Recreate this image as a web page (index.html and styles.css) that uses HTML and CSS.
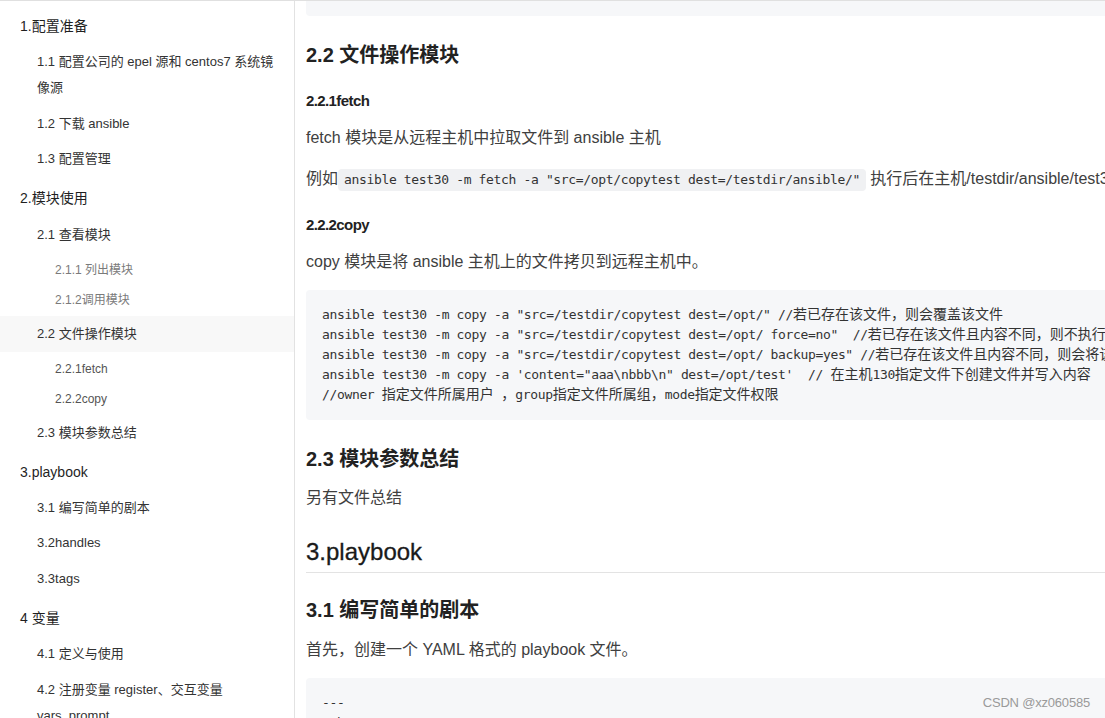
FILE: index.html
```html
<!DOCTYPE html>
<html lang="zh-CN">
<head>
<meta charset="utf-8">
<title>ansible 笔记</title>
<link rel="stylesheet" href="styles.css">
</head>
<body>
<div class="page">
  <nav class="toc">
    <ul class="toc-list">
      <li class="l1">1.配置准备</li>
      <li class="l2">1.1 配置公司的 epel 源和 centos7 系统镜像源</li>
      <li class="l2">1.2 下载 ansible</li>
      <li class="l2">1.3 配置管理</li>
      <li class="l1">2.模块使用</li>
      <li class="l2">2.1 查看模块</li>
      <li class="group">
        <ul>
          <li class="l3 muted">2.1.1 列出模块</li>
          <li class="l3 muted">2.1.2调用模块</li>
        </ul>
      </li>
      <li class="l2 active">2.2 文件操作模块</li>
      <li class="group">
        <ul>
          <li class="l3">2.2.1fetch</li>
          <li class="l3">2.2.2copy</li>
        </ul>
      </li>
      <li class="l2">2.3 模块参数总结</li>
      <li class="l1">3.playbook</li>
      <li class="l2">3.1 编写简单的剧本</li>
      <li class="l2">3.2handles</li>
      <li class="l2">3.3tags</li>
      <li class="l1">4 变量</li>
      <li class="l2">4.1 定义与使用</li>
      <li class="l2">4.2 注册变量 register、交互变量 vars_prompt</li>
    </ul>
  </nav>
  <main class="content">
    <div class="pre-tail"></div>
    <h3 class="h3">2.2 文件操作模块</h3>
    <h4 class="h4">2.2.1fetch</h4>
    <p class="para">fetch 模块是从远程主机中拉取文件到 ansible 主机</p>
    <p class="para nowrap">例如<code class="inline">ansible test30 -m fetch -a "src=/opt/copytest dest=/testdir/ansible/"</code> 执行后在主机/testdir/ansible/test30/opt/copytest 中生成文件</p>
    <h4 class="h4">2.2.2copy</h4>
    <p class="para">copy 模块是将 ansible 主机上的文件拷贝到远程主机中。</p>
    <pre class="code">ansible test30 -m copy -a "src=/testdir/copytest dest=/opt/" //<span class="zh">若已存在该文件，则会覆盖该文件</span>
ansible test30 -m copy -a "src=/testdir/copytest dest=/opt/ force=no"  //<span class="zh">若已存在该文件且内容不同，则不执行拷贝</span>
ansible test30 -m copy -a "src=/testdir/copytest dest=/opt/ backup=yes" //<span class="zh">若已存在该文件且内容不同，则会将该文件备份</span>
ansible test30 -m copy -a 'content="aaa\nbbb\n" dest=/opt/test'  // <span class="zh">在主机</span>130<span class="zh">指定文件下创建文件并写入内容</span>
//owner <span class="zh">指定文件所属用户</span> <span class="zh">，</span>group<span class="zh">指定文件所属组，</span>mode<span class="zh">指定文件权限</span></pre>
    <h3 class="h3">2.3 模块参数总结</h3>
    <p class="para">另有文件总结</p>
    <h2 class="h2">3.playbook</h2>
    <h3 class="h3 after-h2">3.1 编写简单的剧本</h3>
    <p class="para">首先，创建一个 YAML 格式的 playbook 文件。</p>
    <pre class="code">---
- hosts: test30
  remote_user: root</pre>
  </main>
</div>
<div class="watermark">CSDN @xz060585</div>
</body>
</html>
```

FILE: styles.css
```css
html, body {
  margin: 0;
  padding: 0;
  background: #ffffff;
}

body {
  width: 1105px;
  height: 718px;
  overflow: hidden;
  position: relative;
  font-family: "Liberation Sans", "Noto Sans CJK SC", sans-serif;
  border-top: 1px solid #e0e0e0;
  box-sizing: border-box;
}

.page {
  display: flex;
  align-items: flex-start;
}

/* ---------- sidebar ---------- */
.toc {
  flex: 0 0 295px;
  width: 295px;
  height: 717px;
  border-right: 1px solid #e2e2e2;
  box-sizing: border-box;
  overflow: hidden;
}

.toc ul {
  list-style: none;
  margin: 0;
  padding: 0;
}

.toc-list {
  padding-top: 4px !important;
}

.l1 {
  font-size: 14px;
  line-height: 28px;
  padding: 7px 20px 4.75px 20px;
  color: #1f1f1f;
}

.l2 {
  font-size: 13px;
  line-height: 26px;
  padding: 4.5px 14px 5px 37px;
  color: #333333;
}

.l2.active {
  background: #f8f8f8;
}

.group ul {
  padding: 2px 0 0.5px 0;
}

.l3 {
  font-size: 12px;
  line-height: 20px;
  padding: 5px 20px 5.5px 55px;
  color: #555555;
}

.l3.muted {
  color: #7a7a7a;
}

/* ---------- main content ---------- */
.content {
  flex: 0 0 1100px;
  width: 1100px;
  padding-left: 11px;
  box-sizing: border-box;
  color: #404040;
}

.pre-tail {
  height: 15px;
  background: #f6f7f9;
  border-radius: 0 0 4px 4px;
}

.h3 {
  font-size: 20px;
  line-height: 28px;
  font-weight: bold;
  color: #222222;
  margin: 25px 0 12px 0;
}

.h3.after-h2 {
  margin-top: 23px;
  margin-bottom: 13px;
}

.h4 {
  font-size: 15px;
  line-height: 24px;
  font-weight: bold;
  letter-spacing: -0.6px;
  color: #222222;
  margin: 20px 0 12px 0;
}

.h2 {
  font-size: 24px;
  line-height: 32px;
  font-weight: normal;
  color: #1a1a1a;
  margin: 25px 0 0 0;
  padding-bottom: 4px;
  border-bottom: 1px solid #e3e3e3;
  -webkit-text-stroke: 0.3px #1a1a1a;
}

.para {
  font-size: 16px;
  line-height: 26px;
  margin: 0 0 15px 0;
  color: #404040;
}

.nowrap {
  white-space: nowrap;
}

.inline {
  font-family: "DejaVu Sans Mono", monospace;
  font-size: 13px;
  letter-spacing: -0.35px;
  background: #f0f1f3;
  color: #333333;
  border-radius: 4px;
  padding: 3px 6px 4px 6px;
}

.code {
  margin: 14px 0 0 0;
  padding: 15px 16px;
  background: #f6f7f9;
  border-radius: 4px;
  font-family: "DejaVu Sans Mono", monospace;
  font-size: 13px;
  line-height: 20px;
  letter-spacing: -0.35px;
  color: #333333;
  white-space: pre;
  overflow: hidden;
}

.code .zh {
  font-family: "Noto Sans CJK SC", sans-serif;
  font-size: 14px;
  line-height: 14px;
  letter-spacing: 0;
}

.watermark {
  position: absolute;
  right: 15px;
  bottom: 8px;
  font-family: "Liberation Sans", sans-serif;
  font-size: 13px;
  color: #9a9a9a;
  letter-spacing: -0.2px;
}
```
